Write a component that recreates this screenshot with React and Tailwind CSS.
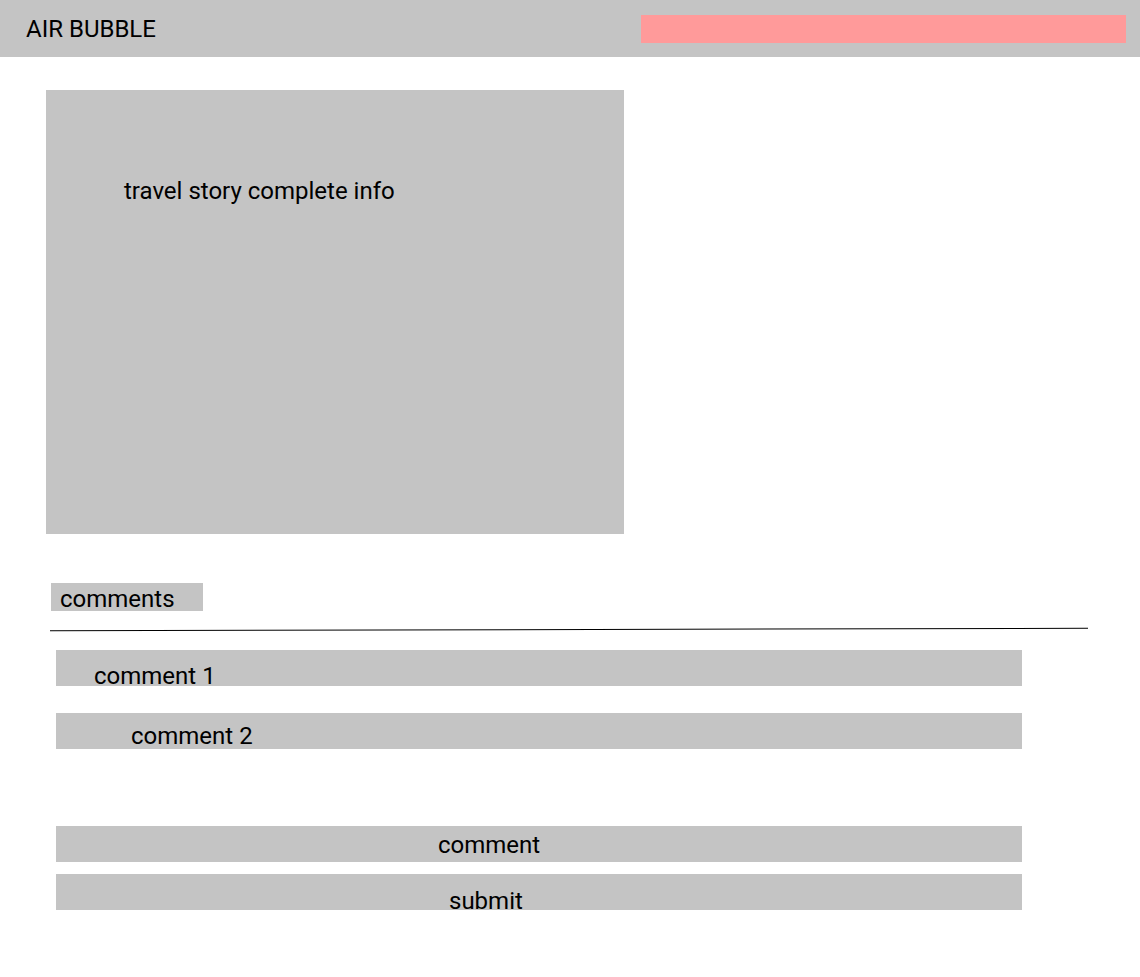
import React from 'react';

const GRAY = 'bg-[#c4c4c4]';

const CommentRow = ({ text, className }) => (
  <div className={`w-[966px] h-[36px] ${GRAY} ${className}`}>
    <span className="block leading-[28px]">{text}</span>
  </div>
);

export default function App() {
  return (
    <div className="min-h-[977px] bg-white text-black text-[24px] font-[Roboto,sans-serif]">
      {/* header */}
      <header className={`h-[57px] flex items-center ${GRAY}`}>
        <div className="pl-[26px] leading-[28px]">AIR BUBBLE</div>
        <div className="ml-auto mr-[14px] w-[485px] h-[28px] bg-[#ff9a9a]" />
      </header>

      {/* story */}
      <div className="pt-[33px] pl-[46px]">
        <div className={`w-[578px] h-[444px] pt-[87px] pl-[78px] ${GRAY}`}>
          <p className="leading-[28px]">travel story complete info</p>
        </div>
      </div>

      {/* comments */}
      <div className="pt-[49px]">
        <div className={`ml-[51px] w-[152px] h-[28px] pl-[9px] ${GRAY}`}>
          <span className="block leading-[28px] pt-[2px]">comments</span>
        </div>
        <div className="ml-[50px] mt-[18px] w-[1038px] h-px bg-black -rotate-[0.14deg]" />

        <div className="ml-[56px] pt-[20px] flex flex-col">
          <CommentRow text="comment 1" className="pt-[12px] pl-[38px]" />
          <CommentRow text="comment 2" className="mt-[27px] pt-[9px] pl-[75px]" />
          <CommentRow text="comment" className="mt-[77px] pt-[5px] pl-[382px]" />
          <CommentRow text="submit" className="mt-[12px] pt-[13px] pl-[393px]" />
        </div>
      </div>
    </div>
  );
}
